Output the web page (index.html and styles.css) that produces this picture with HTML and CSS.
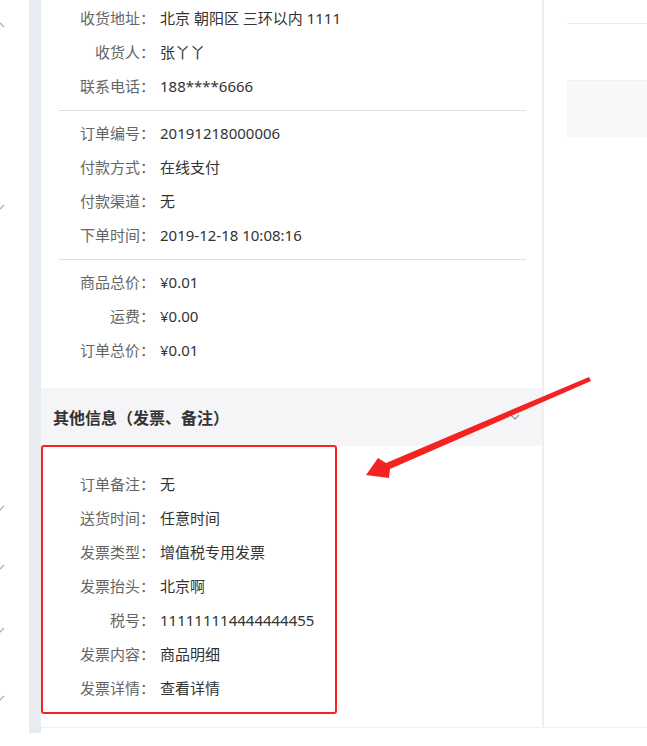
FILE: index.html
```html
<!DOCTYPE html>
<html lang="zh-CN">
<head>
<meta charset="utf-8">
<title>订单详情</title>
<link rel="stylesheet" href="styles.css">
</head>
<body>
<div class="page">
  <nav class="nav">
    <svg class="caret c1" viewBox="0 0 10 6"><path d="M1 5 L5 1 L9 5"/></svg>
    <svg class="caret c2" viewBox="0 0 10 6"><path d="M1 1 L5 5 L9 1"/></svg>
    <svg class="caret c3" viewBox="0 0 10 6"><path d="M1 1 L5 5 L9 1"/></svg>
    <svg class="caret c4" viewBox="0 0 10 6"><path d="M1 1 L5 5 L9 1"/></svg>
    <svg class="caret c5" viewBox="0 0 10 6"><path d="M1 1 L5 5 L9 1"/></svg>
    <svg class="caret c6" viewBox="0 0 10 6"><path d="M1 1 L5 5 L9 1"/></svg>
  </nav>
  <div class="gutter"></div>
  <div class="content">
    <main class="panel">
      <section class="group first">
        <div class="row"><span class="label">收货地址：</span><span class="value">北京 朝阳区 三环以内 1111</span></div>
        <div class="row"><span class="label">收货人：</span><span class="value">张丫丫</span></div>
        <div class="row"><span class="label">联系电话：</span><span class="value">188****6666</span></div>
      </section>
      <section class="group">
        <div class="row"><span class="label">订单编号：</span><span class="value">20191218000006</span></div>
        <div class="row"><span class="label">付款方式：</span><span class="value">在线支付</span></div>
        <div class="row"><span class="label">付款渠道：</span><span class="value">无</span></div>
        <div class="row"><span class="label">下单时间：</span><span class="value">2019-12-18 10:08:16</span></div>
      </section>
      <section class="group last">
        <div class="row"><span class="label">商品总价：</span><span class="value">¥0.01</span></div>
        <div class="row"><span class="label">运费：</span><span class="value">¥0.00</span></div>
        <div class="row"><span class="label">订单总价：</span><span class="value">¥0.01</span></div>
      </section>
      <div class="fold-head">
        <h3>其他信息（发票、备注）</h3>
        <svg class="fold-caret" viewBox="0 0 10 6"><path d="M1 1 L5 5 L9 1"/></svg>
      </div>
      <div class="fold-body">
        <div class="mark">
          <div class="row"><span class="label">订单备注：</span><span class="value">无</span></div>
          <div class="row"><span class="label">送货时间：</span><span class="value">任意时间</span></div>
          <div class="row"><span class="label">发票类型：</span><span class="value">增值税专用发票</span></div>
          <div class="row"><span class="label">发票抬头：</span><span class="value">北京啊</span></div>
          <div class="row"><span class="label">税号：</span><span class="value">111111114444444455</span></div>
          <div class="row"><span class="label">发票内容：</span><span class="value">商品明细</span></div>
          <div class="row"><span class="label">发票详情：</span><span class="value">查看详情</span></div>
        </div>
      </div>
    </main>
    <aside class="aside">
      <div class="aside-line"></div>
      <div class="aside-block"></div>
    </aside>
  </div>
  <svg class="annot" viewBox="0 0 647 746">
    <polygon points="366,475 378,458 386,463 589,377 591,381 390,469 389,478"/>
  </svg>
</div>
</body>
</html>
```

FILE: styles.css
```css
* { box-sizing: border-box; }

body {
  margin: 0;
  background: #fff;
  font-family: "Noto Sans", "Noto Sans CJK SC", sans-serif;
  font-size: 15px;
}

.page {
  position: relative;
  display: flex;
  width: 647px;
  height: 746px;
  overflow: hidden;
}

/* side menu, only the expand carets peek in */
.nav {
  width: 29px;
  flex: none;
  display: flex;
  flex-direction: column;
}
.caret {
  display: block;
  width: 10px;
  height: 6px;
  margin-left: -5px;
  fill: none;
  stroke: #aab3c0;
  stroke-width: 1.3;
}
.c1 { margin-top: 22px; }
.c2 { margin-top: 176px; }
.c3 { margin-top: 295px; }
.c4 { margin-top: 53px; }
.c5 { margin-top: 57px; }
.c6 { margin-top: 62px; }

.gutter {
  width: 12px;
  height: 733px;
  flex: none;
  background: #e8ecf1;
}

.content {
  flex: 1;
  display: flex;
  height: 728px;
  border-bottom: 1px solid #eef0f3;
}

.panel {
  width: 503px;
  flex: none;
  border-right: 2px solid #eeeeee;
}

.group {
  margin: 0 16px 0 18px;
  padding: 5px 0 7px;
  border-bottom: 1px solid #e0e0e0;
}
.group.first { padding-top: 1px; }
.group.last { border-bottom: none; padding-bottom: 21px; }

.row {
  display: flex;
  align-items: center;
  height: 34px;
  line-height: 1;
  white-space: nowrap;
}
.label {
  width: 96px;
  flex: none;
  text-align: right;
  color: #666;
}
.value {
  margin-left: 5px;
  color: #333;
}

.fold-head {
  height: 58px;
  display: flex;
  align-items: center;
  justify-content: space-between;
  padding: 0 22px 0 12px;
  background: #f5f5f7;
}
.fold-head h3 {
  margin: 0;
  font-size: 16px;
  font-weight: bold;
  color: #333;
}
.fold-caret {
  width: 10px;
  height: 6px;
  fill: none;
  stroke: #8e9bb0;
  stroke-width: 1.3;
}

.mark {
  width: 296px;
  margin-top: -1px;
  padding: 20px 0 7px 16px;
  border: 2px solid #f52323;
  border-radius: 3px;
}

.aside {
  flex: 1;
  padding-left: 23px;
}
.aside-line {
  height: 24px;
  border-bottom: 1px solid #ececec;
}
.aside-block {
  margin-top: 56px;
  height: 57px;
  background: #f8f8f9;
  border-top: 1px solid #f0f0f3;
}

/* callout arrow drawn over the page */
.annot {
  position: absolute;
  left: 0;
  top: 0;
  width: 647px;
  height: 746px;
  pointer-events: none;
}
.annot polygon { fill: #f52222; }
```
